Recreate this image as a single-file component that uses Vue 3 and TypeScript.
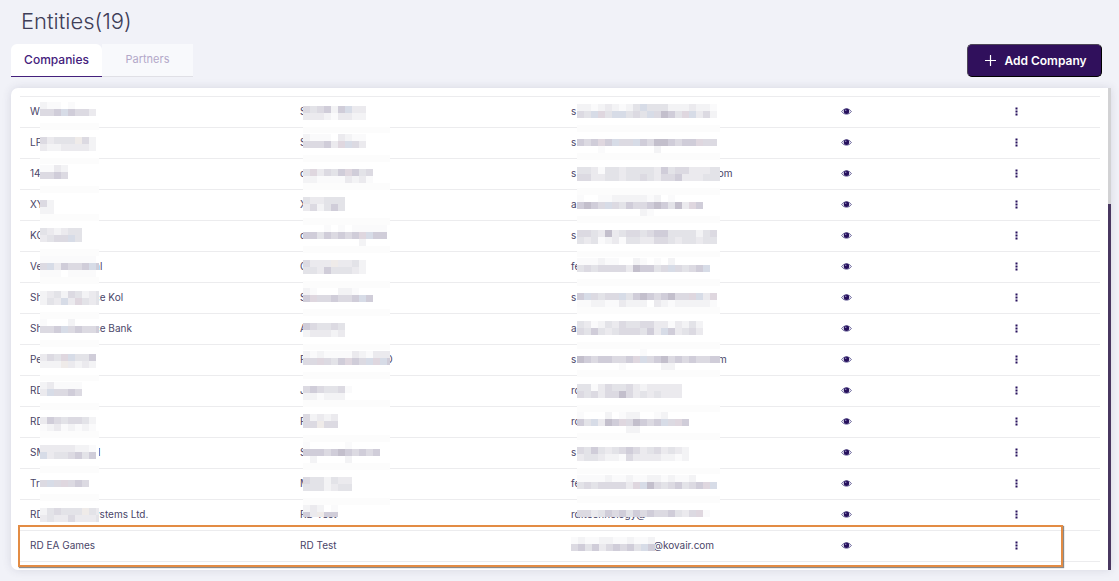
<script setup lang="ts">
import { ref } from 'vue'

interface Mask {
  lead: string
  tail: string
  top: number
  rows: string[]
  end: number
}

const CELL = 7
const widths = [59, 87, 143]
const bases = [102, 106, 104]
const FIRST_ROW = 97
const ROW = 31

const shades: Record<string, string> = {
  a: '#fafafb',
  b: '#f3f3f5',
  c: '#ebeaee',
  d: '#e3e3e8',
  e: '#dcdae2',
  f: '#d0cdd9',
  g: '#c3bfcc',
  p: '#dfd7df',
  u: '#d7dce7',
  w: '#efebe9',
}

const m = (lead: string, top: number, rows: string, tail = '', end = 24): Mask => ({
  lead,
  top,
  rows: rows.split('/'),
  tail,
  end,
})

const entities: Mask[][] = [
  [m('W', 5, 'baa.a/eefufeec'), m('S', 9, 'edefbfucc/cccbaccbb'), m('s', 7, 'bbabcbabdudddbbbcbba/edupduudeduegfdpuceb')],
  [m('LP', 9, 'ecdddweb/cbbccccb'), m('S', 6, 'baaa.cbaa/eeefcpuec'), m('s', 11, 'fefpfueeufeggfeffpee/...a.......b')],
  [m('14', 6, 'aacb/eefe'), m('c', 10, 'dpcedfpfde/bbaaaacbca'), m('s', 8, 'ddcaddcddddcfdeecccdd/eeccddcddedceefcccddd', 'com')],
  [m('XY', 10, 'eb/bb'), m('X', 7, 'dccddd/cebdfd'), m('a', 5, 'a..aabbbbbab.a/fgfeuedfeefgfdgcpf/.........ba')],
  [m('KC', 7, 'dcbcdd/cdeeud'), m('c', 4, '...a.a.aaaaa/ffdfefefpuff/........b'), m('s', 9, 'eedcgcdeedeffddddbde/dcdabcaddcceedcddcdd')],
  [m('Ve', 4, 'aaaaaaaa/eucfeefuf/aaa.aaaa', 'nl'), m('C', 8, 'ecccwccdb/ddcfdddcb'), m('fe', 6, 'aaabaa..ba.a.b/dedeeeecgffdeuedefu')],
  [m('Sh', 8, 'bcdbedbcd/bdcucpdcd', 'ce Kol'), m('S', 5, 'ba...bba/fpeefeefuf'), m('s', 10, 'fuedeeudfgfefgeepucp/aabbaacbbb.cbabbbbba')],
  [m('Sh', 5, 'a...b/eefuefeef', 'ce Bank'), m('A', 9, 'fedded/bcccbc'), m('a', 7, 'dcabdceddeeccacbdb/edfdcdeeedfcufcdec')],
  [m('Pe', 9, 'cedpuddf/bbbwcbcb'), m('F', 6, 'babaaaacbaccc/eepedfpfeupuf', 'O'), m('s', 4, '.........a/gfeffeefpuefgefefeeff/......a.....bb', 'om')],
  [m('RD', 6, 'bcaaaa/cueefe'), m('J', 10, 'efeddea/bbabbb'), m('rc', 8, 'ddaceddecbccccc/edeceegecdcdccc')],
  [m('RD', 10, 'cfedeedb/abcababa'), m('F', 7, 'ebcbc/eewee'), m('rc', 5, 'a...b.abb..ab/fducgfpegfefuepf/.......bb')],
  [m('SM', 7, 'cccccbba/ucddefdf', 'i1'), m('S', 4, 'a.....a/fffefgfefef/.b....b'), m('s', 9, 'edfdcdefecdecdcb/cddcbbaeccccbbab')],
  [m('Tr', 11, 'euepefe'), m('M', 8, 'eddbdcc/dddbcdd'), m('fe', 6, 'aaaabaabaabbabaab/dedeeeecpugedefdefpu')],
  [m('RD', 8, 'bdedddwdc/cdccecccd', 'ystems Ltd.'), m('RD Test', 5, 'bcb.a/fcwff', '', 17), m('rd.technology@', 10, 'eecdfefdfefeefdcepa', '', 17)],
]

const cover = { top: 6, rows: ['abaabbaabaab', 'efdfcefefduf'] }

const tabs = ['Companies', 'Partners']
const active = ref('Companies')

function cells(top: number, rows: string[]) {
  return rows.flatMap((line, r) =>
    [...line].flatMap((ch, c) => (ch in shades ? [{ x: c * CELL, y: top + r * CELL, fill: shades[ch] }] : [])),
  )
}

function band(row: number, col: number) {
  const line = FIRST_ROW + ROW * row + ROW - 1
  const y = bases[col] + CELL * Math.floor((line - bases[col]) / CELL)
  return y - FIRST_ROW - ROW * row
}
</script>

<template>
  <main class="page">
    <h1>Entities(19)</h1>
    <div class="toolbar">
      <div class="tabs" role="tablist">
        <button
          v-for="t in tabs"
          :key="t"
          type="button"
          role="tab"
          class="tab"
          :class="{ active: active === t }"
          :aria-selected="active === t"
          @click="active = t"
        >
          {{ t }}
        </button>
      </div>
      <button type="button" class="add">
        <svg width="11" height="11" viewBox="0 0 11 11" aria-hidden="true">
          <path d="M5.5 0.5v10M0.5 5.5h10" stroke="#fff" stroke-width="1.2" stroke-linecap="round" />
        </svg>
        <span>Add Company</span>
      </button>
    </div>

    <section class="card">
      <div class="list">
        <table aria-label="Companies">
          <colgroup>
            <col class="wide" /><col class="wide" /><col class="wide" /><col class="view" /><col />
          </colgroup>
          <tbody>
            <tr v-for="(row, i) in entities" :key="i">
              <td v-for="(cell, c) in row" :key="c">
                <div class="cell" :class="'col' + c">
                  <span class="lead">{{ cell.lead }}</span>
                  <svg class="mask" :width="widths[c]" height="30" aria-hidden="true">
                    <rect x="0" y="5" :width="widths[c]" :height="cell.end - 5" fill="#fff" />
                    <svg x="0" y="0" :width="widths[c]" :height="cell.end === 17 ? 17 : 30">
                      <rect
                        v-for="(s, k) in cells(cell.top, cell.rows)"
                        :key="k"
                        :x="s.x"
                        :y="s.y"
                        width="7"
                        height="7"
                        :fill="s.fill"
                      />
                    </svg>
                    <rect v-if="i < 13" x="0" :y="band(i, c)" :width="widths[c]" height="7" fill="#fcfcfc" />
                  </svg>
                  <span v-if="cell.tail" class="tail">{{ cell.tail }}</span>
                </div>
              </td>
              <td class="actions">
                <button type="button" class="icon" aria-label="View">
                  <svg width="11" height="9" viewBox="0 0 11 9">
                    <path d="M0.7 4.5C2.8 1 8.2 1 10.3 4.5C8.2 8 2.8 8 0.7 4.5Z" fill="#fff" stroke="#5a5590" stroke-width="1" />
                    <circle cx="5.5" cy="4.3" r="2.7" fill="#26105c" />
                    <circle cx="4.7" cy="3.3" r="0.8" fill="#8f88c0" />
                  </svg>
                </button>
              </td>
              <td>
                <button type="button" class="icon" aria-label="More actions">
                  <svg width="7" height="9" viewBox="0 0 7 9">
                    <path d="M2.5 0.5h2v2h-2zM2.5 3.5h2v2h-2zM2.5 6.5h2v2h-2z" fill="#26105c" />
                  </svg>
                </button>
              </td>
            </tr>
            <tr>
              <td><div class="cell">RD EA Games</div></td>
              <td><div class="cell">RD Test</div></td>
              <td>
                <div class="cell col2">
                  <svg class="mask" width="80" height="30" aria-hidden="true">
                    <rect
                      v-for="(s, k) in cells(cover.top, cover.rows)"
                      :key="k"
                      :x="s.x"
                      :y="s.y"
                      width="7"
                      height="7"
                      :fill="s.fill"
                    />
                  </svg>
                  <span class="shown">s@kovair.com</span>
                </div>
              </td>
              <td class="actions">
                <button type="button" class="icon" aria-label="View">
                  <svg width="11" height="9" viewBox="0 0 11 9">
                    <path d="M0.7 4.5C2.8 1 8.2 1 10.3 4.5C8.2 8 2.8 8 0.7 4.5Z" fill="#fff" stroke="#5a5590" stroke-width="1" />
                    <circle cx="5.5" cy="4.3" r="2.7" fill="#26105c" />
                    <circle cx="4.7" cy="3.3" r="0.8" fill="#8f88c0" />
                  </svg>
                </button>
              </td>
              <td>
                <button type="button" class="icon" aria-label="More actions">
                  <svg width="7" height="9" viewBox="0 0 7 9">
                    <path d="M2.5 0.5h2v2h-2zM2.5 3.5h2v2h-2zM2.5 6.5h2v2h-2z" fill="#26105c" />
                  </svg>
                </button>
              </td>
            </tr>
          </tbody>
        </table>
      </div>
      <div class="track"><div class="thumb"></div></div>
      <div class="highlight"></div>
    </section>
  </main>
</template>

<style>
body {
  margin: 0;
  background: #f1f2f8;
}
</style>

<style scoped>
.page {
  font-family: Inter, 'Liberation Sans', sans-serif;
  padding: 8px 8px 11px 11px;
  color: #4a4568;
}
h1 {
  margin: 0;
  padding-left: 10px;
  font-size: 22px;
  line-height: 26px;
  font-weight: 300;
  color: #3f3e58;
}
.toolbar {
  display: flex;
  justify-content: space-between;
  align-items: center;
  margin-top: 10px;
  padding-right: 9px;
}
.tabs {
  display: flex;
}
button {
  font-family: inherit;
  border: 0;
  background: none;
  padding: 0;
  cursor: pointer;
}
.tab {
  width: 91px;
  height: 33px;
  padding-bottom: 3px;
  font-size: 11px;
  color: #b3a8c9;
  background: #f8f9fc;
  border-bottom: 1px solid #e0e0e6;
}
.tab.active {
  padding-bottom: 1px;
  font-size: 12px;
  font-weight: 500;
  color: #44207c;
  background: #fff;
  border-bottom-color: #44207c;
  border-radius: 6px 6px 0 0;
}
.add {
  display: flex;
  align-items: center;
  justify-content: center;
  gap: 8px;
  width: 135px;
  height: 33px;
  padding-left: 3px;
  border: 1px solid #000;
  border-top-color: #4d4658;
  border-left-color: #4d4658;
  border-radius: 5px;
  background: #30105c;
  color: #fff;
  font-size: 12px;
  font-weight: 600;
}
.card {
  position: relative;
  display: flex;
  margin-top: 11px;
  background: #fff;
  border-radius: 7px 0 0 7px;
  box-shadow: 0 0 10px rgba(60, 60, 90, 0.14);
}
.list {
  flex: 1;
  padding: 8px 8px 8px 9px;
}
table {
  width: 100%;
  table-layout: fixed;
  border-collapse: separate;
  border-spacing: 0;
  border-top: 1px solid #ececee;
}
.wide {
  width: 25%;
}
.view {
  width: 16%;
}
td {
  height: 30px;
  padding: 0 0 0 10px;
  border-bottom: 1px solid #ececee;
  font-size: 10px;
  line-height: 28px;
  white-space: nowrap;
}
.actions {
  padding-left: 11px;
}
.cell {
  display: flex;
  height: 30px;
}
.lead {
  width: 10px;
}
.col1 .lead {
  width: 3px;
}
.col2 {
  padding-left: 1px;
}
.col2 .lead {
  width: 6px;
}
.mask {
  position: relative;
  z-index: 1;
  flex: none;
  overflow: visible;
}
.tail {
  margin-left: -5px;
}
.col2 .tail {
  margin-left: -8px;
}
.shown {
  margin-left: -3px;
}
.icon {
  display: flex;
  align-items: center;
  height: 28px;
  margin-bottom: 2px;
}
.track {
  width: 3px;
  background: #d2d2d4;
}
.thumb {
  height: 76%;
  margin-top: 116px;
  background: #483760;
}
.highlight {
  position: absolute;
  z-index: 2;
  left: 7px;
  right: 48px;
  bottom: 3px;
  height: 38px;
  border: 2px solid #e38c44;
  box-shadow: 1px 1px 1px rgba(60, 60, 60, 0.6);
  pointer-events: none;
}
</style>
